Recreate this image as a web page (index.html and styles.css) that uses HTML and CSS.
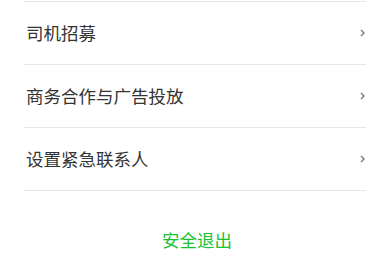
FILE: index.html
```html
<!DOCTYPE html>
<html lang="zh">
<head>
<meta charset="utf-8">
<link rel="stylesheet" href="styles.css">
</head>
<body>
<div class="list">
  <div class="item"><span class="label">司机招募</span><svg class="chev" width="5" height="8" viewBox="0 0 5 8"><polyline points="1,1 4,4 1,7" fill="none" stroke="#7a7a7a" stroke-width="1.4"/></svg></div>
  <div class="item"><span class="label">商务合作与广告投放</span><svg class="chev" width="5" height="8" viewBox="0 0 5 8"><polyline points="1,1 4,4 1,7" fill="none" stroke="#7a7a7a" stroke-width="1.4"/></svg></div>
  <div class="item last"><span class="label">设置紧急联系人</span><svg class="chev" width="5" height="8" viewBox="0 0 5 8"><polyline points="1,1 4,4 1,7" fill="none" stroke="#7a7a7a" stroke-width="1.4"/></svg></div>
</div>
<div class="logout">安全退出</div>
</body>
</html>
```
FILE: styles.css
```css
html, body {
  margin: 0;
  padding: 0;
  background: #fff;
  font-family: "Noto Sans CJK SC", "Noto Sans", sans-serif;
}
.list {
  padding-top: 1px;
  margin: 0 24px;
}
.item {
  height: 62px;
  border-top: 1px solid #e6e6e6;
  display: flex;
  align-items: center;
  justify-content: space-between;
  padding: 0 1px 0 2px;
}
.item.last {
  border-bottom: 1px solid #e6e6e6;
}
.label {
  font-size: 17.5px;
  color: #333333;
  line-height: 1;
}
.chev {
  display: block;
}
.logout {
  margin-top: 37px;
  line-height: 24px;
  text-align: center;
  font-size: 17.5px;
  color: #16c232;
  padding-left: 4px;
}
```
